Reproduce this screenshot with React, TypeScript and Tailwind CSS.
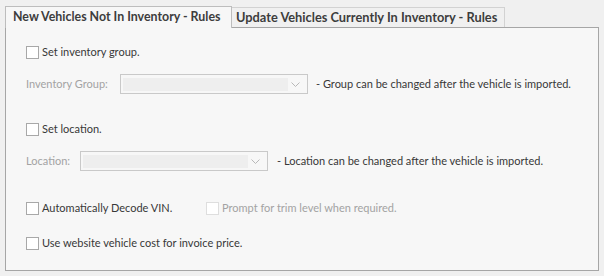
import React from "react";

const font = { fontFamily: "Lato, 'Open Sans', sans-serif" };

function Check({ label, disabled = false }: { label: string; disabled?: boolean }) {
  return (
    <div className="flex items-center h-[20px]">
      <div
        className={
          "w-[13px] h-[13px] border bg-white " +
          (disabled ? "border-[#dedede]" : "border-[#a8a8a8]")
        }
      />
      <span className={"ml-[3px] text-[11px] " + (disabled ? "text-[#a3a3a3]" : "text-[#383838]")}>
        {label}
      </span>
    </div>
  );
}

function Combo() {
  return (
    <div className="w-[188px] h-[20px] border border-[#c9c9c9] bg-[#f7f7f7] flex items-center pl-[2px] pr-[4px]">
      <div className="w-[165px] h-[13px] bg-[#eeeeee]" />
      <div className="flex-1 flex justify-center">
        <svg width="9" height="5" viewBox="0 0 9 5">
          <path d="M0.5 0.5 L4.5 4.5 L8.5 0.5" fill="none" stroke="#b8b8b8" strokeWidth="1" />
        </svg>
      </div>
    </div>
  );
}

export default function App() {
  return (
    <div className="w-[604px] h-[276px] bg-[#f0f0f0] pt-[5px] pl-[5px] pr-[5px]" style={font}>
      <div className="flex items-end h-[22px]">
        <div className="relative z-10 h-[22px] mb-[-1px] bg-[#f7f7f7] border-l border-t border-r border-[#bdbdbd] w-[227px] pl-[7px] flex items-center text-[12.4px] font-bold text-[#3d3d3d] whitespace-nowrap">
          New Vehicles Not In Inventory - Rules
        </div>
        <div className="h-[20px] border-t border-r border-[#d2d2d2] w-[273px] pl-[4px] flex items-center text-[12.8px] font-bold text-[#3d3d3d] whitespace-nowrap">
          Update Vehicles Currently In Inventory - Rules
        </div>
      </div>
      <div className="w-[594px] h-[244px] border border-[#a6a6a6] bg-[#f7f7f7] pt-[14px] pl-[20px] flex flex-col">
        <Check label="Set inventory group." />
        <div className="mt-[12px] flex items-center h-[20px] text-[11px]">
          <span className="text-[#a3a3a3] w-[94px]">Inventory Group:</span>
          <Combo />
          <span className="ml-[8px] text-[#383838]">- Group can be changed after the vehicle is imported.</span>
        </div>
        <div className="mt-[25px]">
          <Check label="Set location." />
        </div>
        <div className="mt-[12px] flex items-center h-[20px] text-[11px]">
          <span className="text-[#a3a3a3] w-[54px]">Location:</span>
          <Combo />
          <span className="ml-[9px] text-[#383838]">- Location can be changed after the vehicle is imported.</span>
        </div>
        <div className="mt-[27px] flex items-center">
          <div className="w-[180px]">
            <Check label="Automatically Decode VIN." />
          </div>
          <Check label="Prompt for trim level when required." disabled />
        </div>
        <div className="mt-[15px]">
          <Check label="Use website vehicle cost for invoice price." />
        </div>
      </div>
    </div>
  );
}
